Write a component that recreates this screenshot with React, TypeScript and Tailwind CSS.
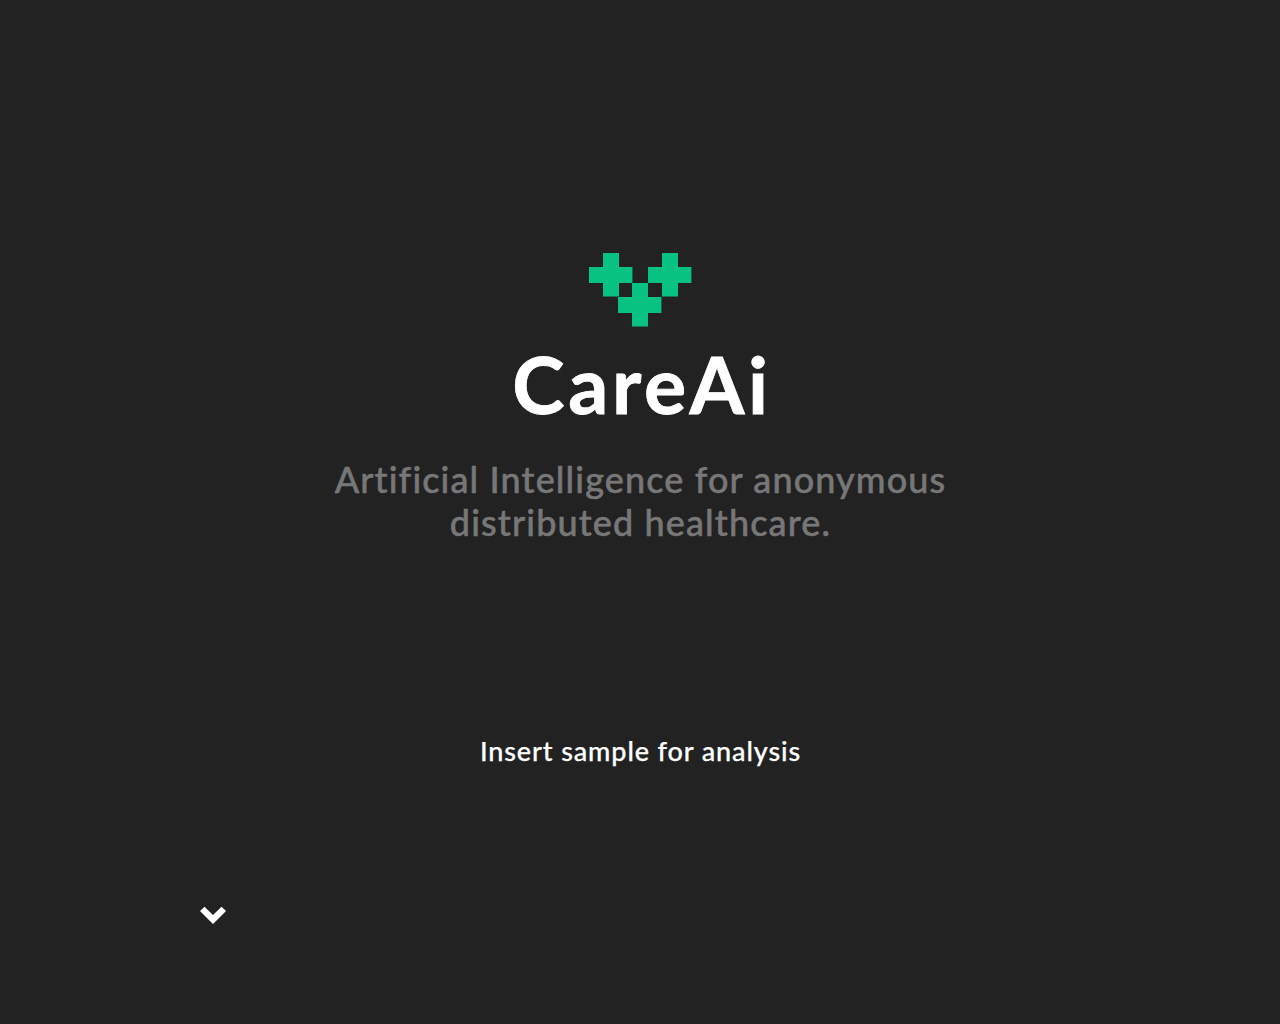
function Logo() {
  return (
    <svg className="h-[74px] w-[103px] shrink-0" viewBox="0 0 103 74" fill="#08c282" shapeRendering="geometricPrecision" aria-hidden="true">
      <path d="M14 0h16v14h13.4v16H30v13.4H14V30H0V14h14z" />
      <path d="M73 0h16v14h13.4v16H89v13.4H73V30H59V14h14z" />
      <path d="M43 30h16v14h13.4v16H59v13.4H43V60H29V44h14z" />
    </svg>
  );
}

function ChevronDown() {
  return (
    <svg className="h-[18px] w-[26px]" viewBox="0 0 26 18" fill="#fff" aria-hidden="true">
      <path d="M4.5.8 13 9.1 21.5.8 26 5.1 13 18 0 5.1z" />
    </svg>
  );
}

export default function App() {
  return (
    <main className="flex h-screen w-full flex-col items-center overflow-hidden bg-[#222222] pt-[253px] text-center font-['Lato',sans-serif] text-white">
      <div className="flex w-[102px]">
        <Logo />
      </div>
      <h1 className="mt-[9px] pl-[4px] text-[79px] leading-[96px] font-bold tracking-[3.7px] whitespace-nowrap [-webkit-text-stroke:0.8px_#fff]">CareAi</h1>
      <p className="mt-[26px] pl-[1px] text-[36px] leading-[43px] font-medium tracking-[1.12px] whitespace-nowrap text-[#777777] [-webkit-text-stroke:0.5px_#777777]">
        <span className="block">Artificial Intelligence for anonymous</span>
        <span className="block">distributed healthcare.</span>
      </p>
      <p className="mt-[190px] pl-[1px] text-[27px] leading-[34px] font-medium tracking-[0.88px] whitespace-nowrap [-webkit-text-stroke:0.25px_#fff]">Insert sample for analysis</p>
      <div className="mt-[138px] flex w-[880px]">
        <ChevronDown />
      </div>
    </main>
  );
}
